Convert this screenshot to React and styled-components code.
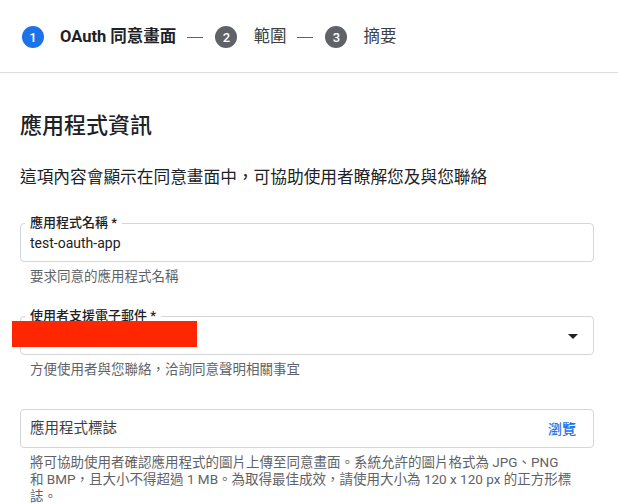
import React from 'react';
import styled, { createGlobalStyle } from 'styled-components';

const GlobalStyle = createGlobalStyle`
  html, body { margin: 0; padding: 0; background: #fff; overflow: hidden; }
  body {
    font-family: Roboto, "Noto Sans CJK TC", sans-serif;
    color: #202124;
    -webkit-font-smoothing: antialiased;
  }
  * { box-sizing: border-box; }
`;

const Page = styled.div`
  width: 618px;
  height: 503px;
  overflow: hidden;
`;

const Stepper = styled.nav`
  display: flex;
  align-items: center;
  height: 73px;
  padding: 2px 0 0 22px;
  border-bottom: 1px solid #dadce0;
`;

const Step = styled.div`
  display: flex;
  align-items: center;
  gap: 16px;
`;

const StepNum = styled.span`
  width: 22px;
  height: 22px;
  border-radius: 50%;
  background: ${(p) => (p.$active ? '#1a73e8' : '#5f6368')};
  color: #fff;
  font-size: 13px;
  font-weight: 500;
  display: flex;
  align-items: center;
  justify-content: center;
  line-height: 1;
`;

const StepLabel = styled.span`
  font-size: 16.5px;
  line-height: 20px;
  font-weight: ${(p) => (p.$active ? 700 : 400)};
  color: ${(p) => (p.$active ? '#202124' : '#3c4043')};
`;

const StepSep = styled.span`
  width: 16px;
  height: 1px;
  background: #5f6368;
  margin: 0 12px 0 11px;
`;

const Content = styled.main`
  padding: 0 24px 0 20px;
`;

const Heading = styled.h2`
  margin: 39px 0 0;
  font-size: 22px;
  line-height: 28px;
  font-weight: 500;
  color: #202124;
`;

const Description = styled.p`
  margin: 26px 0 0;
  font-size: 16.7px;
  line-height: 24px;
  color: #202124;
`;

const Fields = styled.div`
  margin-top: 33px;
  display: flex;
  flex-direction: column;
  gap: 31px;
`;

const FieldWrap = styled.div`
  display: flex;
  flex-direction: column;
`;

const Box = styled.div`
  position: relative;
  height: 39px;
  border: 1px solid #d3d5d8;
  border-radius: 4px;
  display: flex;
  align-items: center;
  justify-content: space-between;
  padding: 0 8px 0 9px;
`;

const FloatLabel = styled.span`
  position: absolute;
  top: -9px;
  left: 4px;
  padding: 0 5px;
  background: #fff;
  font-size: 13px;
  line-height: 16px;
  font-weight: 500;
  color: #202124;
`;

const Value = styled.span`
  line-height: 20px;
  color: ${(p) => (p.$placeholder ? '#3c4043' : '#202124')};
  font-size: ${(p) => (p.$placeholder ? '14.5px' : '14px')};
`;

const Browse = styled.button`
  border: 0;
  background: none;
  padding: 0;
  margin-right: 9px;
  font-family: inherit;
  font-size: 14px;
  line-height: 20px;
  font-weight: 500;
  color: #1a73e8;
  cursor: pointer;
`;

const Redaction = styled.div`
  position: absolute;
  left: -9px;
  top: 4px;
  width: 185px;
  height: 26px;
  background: #ff2600;
`;

const Caret = styled.svg`
  width: 24px;
  height: 24px;
  fill: #202124;
`;

const Helper = styled.div`
  margin-top: 6px;
  padding-left: 10px;
  font-size: 13.5px;
  line-height: 17px;
  color: #5f6368;
  white-space: nowrap;
`;

function Field({ label, helper, children }) {
  return (
    <FieldWrap>
      <Box>
        {label && <FloatLabel>{label}</FloatLabel>}
        {children}
      </Box>
      <Helper>{helper}</Helper>
    </FieldWrap>
  );
}

export default function App() {
  return (
    <Page>
      <GlobalStyle />
      <Stepper>
        <Step>
          <StepNum $active>1</StepNum>
          <StepLabel $active>OAuth 同意畫面</StepLabel>
        </Step>
        <StepSep />
        <Step>
          <StepNum>2</StepNum>
          <StepLabel>範圍</StepLabel>
        </Step>
        <StepSep />
        <Step>
          <StepNum>3</StepNum>
          <StepLabel>摘要</StepLabel>
        </Step>
      </Stepper>
      <Content>
        <Heading>應用程式資訊</Heading>
        <Description>這項內容會顯示在同意畫面中，可協助使用者瞭解您及與您聯絡</Description>
        <Fields>
          <Field label="應用程式名稱 *" helper="要求同意的應用程式名稱">
            <Value>test-oauth-app</Value>
          </Field>
          <Field label="使用者支援電子郵件 *" helper="方便使用者與您聯絡，洽詢同意聲明相關事宜">
            <Redaction />
            <Value />
            <Caret viewBox="0 0 24 24">
              <path d="M7 10l5 5 5-5z" />
            </Caret>
          </Field>
          <Field
            helper={
              <>
                將可協助使用者確認應用程式的圖片上傳至同意畫面。系統允許的圖片格式為 JPG、PNG
                <br />
                和 BMP，且大小不得超過 1 MB。為取得最佳成效，請使用大小為 120 x 120 px 的正方形標
                <br />
                誌。
              </>
            }
          >
            <Value $placeholder>應用程式標誌</Value>
            <Browse>瀏覽</Browse>
          </Field>
        </Fields>
      </Content>
    </Page>
  );
}
